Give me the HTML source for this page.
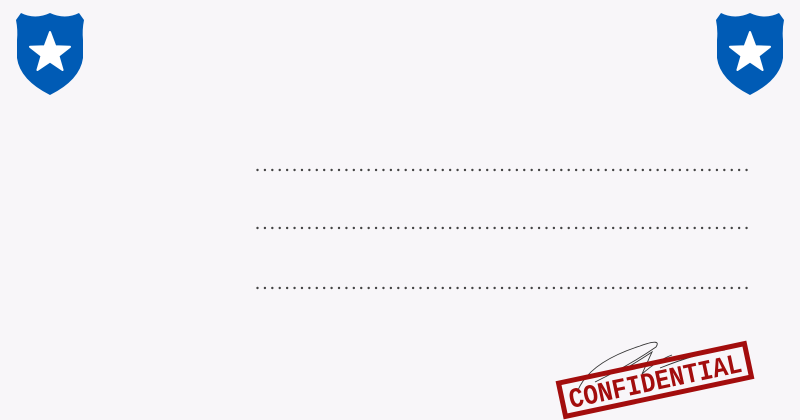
<!DOCTYPE html>
<html><head><meta charset="utf-8"><style>
html,body{margin:0;padding:0;width:800px;height:420px;overflow:hidden;background:#f8f6f9;}
svg{position:absolute;left:0;top:0}
</style></head><body>
<svg width="800" height="420" viewBox="0 0 800 420" xmlns="http://www.w3.org/2000/svg">
<defs>
<g id="badge">
<path d="M16,20 L21,13 Q35,20 50,13 Q65,20 79,13 L84,20 Q82,30 83,40 L83,58 Q80,80 50,95 Q20,80 17,58 L17,40 Q18,30 16,20Z" fill="#005bb5"/>
<polygon fill="#fff" stroke="#fff" stroke-width="2" stroke-linejoin="round" points="50,32 55.3,46.2 70,46.8 58.5,55.9 62.6,70 50,61.6 37.4,70 41.5,55.9 30,46.8 44.7,46.2"/>
</g>
</defs>
<use href="#badge"/>
<use href="#badge" x="700"/>
<g stroke="#444" stroke-width="2.4" stroke-linecap="round" stroke-dasharray="0 7.41">
<line x1="257.5" y1="170" x2="748" y2="170"/>
<line x1="257.5" y1="228" x2="748" y2="228"/>
<line x1="257.5" y1="288" x2="748" y2="288"/>
</g>
<path d="M578,390 Q590,362 640,346 Q662,338 656,347 Q630,365 595,382 M620,372 Q640,360 652,352 L642,374 Q658,360 672,355 M660,368 Q700,352 725,350" fill="none" stroke="#333" stroke-width="0.9"/>
<g transform="translate(655,380) rotate(-12)">
<rect x="-95" y="-17" width="190" height="34" fill="none" stroke="#a30d0d" stroke-width="5"/>
<text x="0" y="10" text-anchor="middle" font-family="Liberation Mono, monospace" font-weight="bold" font-size="28" fill="#a30d0d" textLength="176" lengthAdjust="spacingAndGlyphs">CONFIDENTIAL</text>
</g>
</svg>
</body></html>
